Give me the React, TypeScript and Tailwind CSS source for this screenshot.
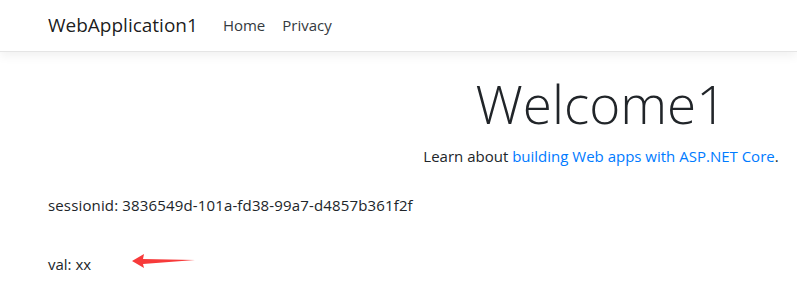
export default function App() {
  return (
    <div className="w-[797px] h-[297px] overflow-hidden bg-white text-[#212529] font-['Open_Sans',sans-serif]">
      <header className="h-[52px] border-b border-[#e5e5e5] shadow-[0_4px_10px_rgba(0,0,0,0.06)] flex items-center px-[48px]">
        <a className="text-[19px] text-black/90 mr-[25px]">WebApplication1</a>
        <nav className="flex gap-[17px] text-[15px] text-[#343a40]">
          <a>Home</a>
          <a>Privacy</a>
        </nav>
      </header>

      <main className="px-[48px] pt-[20px]">
        <div className="w-[1106px] text-center">
          <h1 className="text-[53px] font-light leading-[1.2]">Welcome1</h1>
          <p className="text-[15px] mt-[9px]">
            Learn about <a className="text-[#007bff]">building Web apps with ASP.NET Core</a>.
          </p>
        </div>

        <p className="text-[15px] mt-[27px] tracking-[0.15px]">sessionid: 3836549d-101a-fd38-99a7-d4857b361f2f</p>

        <div className="flex items-center mt-[36px]">
          <p className="text-[15px]">val: xx</p>
          <svg width="66" height="18" viewBox="0 0 66 18" className="ml-[40px] -mt-[6px]">
            <polygon points="1,9 13,2 12,7 64,8 12,12 13,16" fill="#f73a3a" />
          </svg>
        </div>
      </main>
    </div>
  );
}
